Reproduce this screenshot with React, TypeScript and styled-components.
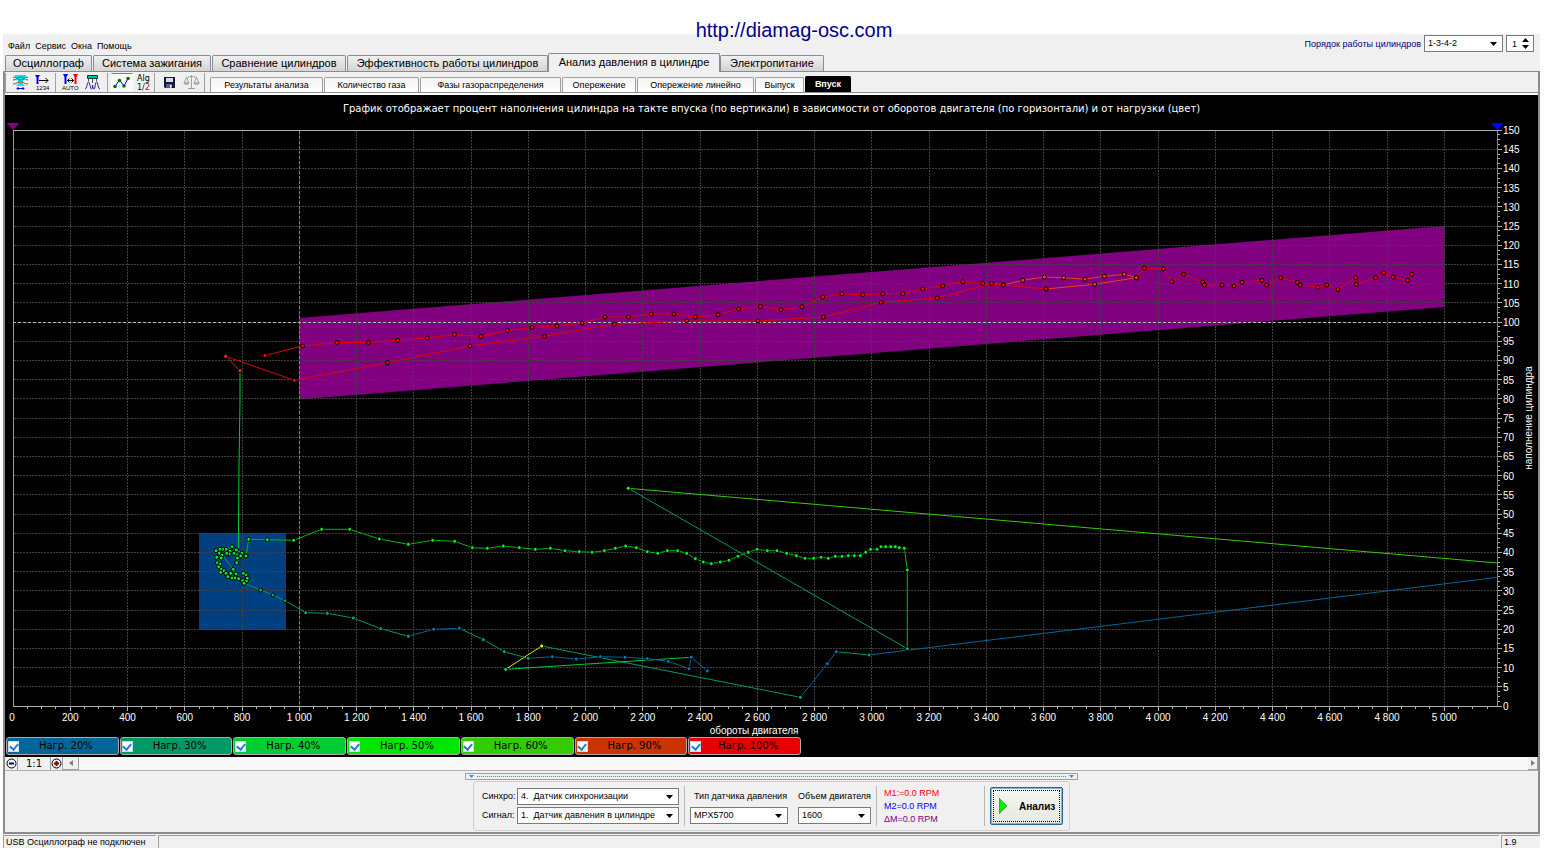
import React from "react";
import styled, { createGlobalStyle, css } from "styled-components";

const SANS = '"Liberation Sans", Arial, sans-serif';
const WIDE = '"DejaVu Sans", Verdana, sans-serif';

const GlobalStyle = createGlobalStyle`
  * { box-sizing: border-box; }
  body { margin: 0; background: #fff; color: #000; font: 9px/13px ${SANS}; }
  button, input, select { font: inherit; color: inherit; margin: 0; border-radius: 0; }
  svg { flex-shrink: 0; }
`;

/* ---------- frame ---------- */

const Page = styled.div`
  padding: 0 11px 4px 3px;
`;

const Banner = styled.header`
  height: 34px;
  padding: 18px 0 0 45px;
  text-align: center;
`;

const SiteLink = styled.a`
  position: relative;
  font: 20px/24px ${SANS};
  color: #00008b;
  text-decoration: none;
`;

const Window = styled.main`
  background: #f0f0f0;
`;

const TopRow = styled.div`
  display: flex;
  justify-content: space-between;
  height: 19px;
  padding: 1px 6px 0 5px;
`;

const Menu = styled.nav`
  display: flex;
  align-items: center;
  gap: 5px;
  padding-top: 4px;
`;

const MenuItem = styled.button`
  padding: 0;
  border: 0;
  background: none;
`;

const FiringOrder = styled.div`
  display: flex;
  gap: 3px;
`;

const FiringLabel = styled.label`
  display: flex;
  align-items: center;
  color: #000080;
`;

/* ---------- drop-downs ---------- */

const SelectBox = styled.span<{ $w: number }>`
  position: relative;
  display: block;
  width: ${(p) => p.$w}px;
  height: 17px;
  svg {
    position: absolute;
    right: 6px;
    top: 7px;
    pointer-events: none;
  }
`;

const NativeSelect = styled.select`
  appearance: none;
  display: block;
  width: 100%;
  height: 17px;
  padding: 0 16px 0 3px;
  border: 1px solid #7a7a7a;
  background: #fff;
  white-space: pre;
`;

function Select({ id, w, value }: { id: string; w: number; value: string }) {
  return (
    <SelectBox $w={w}>
      <NativeSelect id={id} defaultValue={value}>
        <option value={value}>{value}</option>
      </NativeSelect>
      <svg width="7" height="4"><path d="M0 0h7L3.5 4z" /></svg>
    </SelectBox>
  );
}

const Spinner = styled.span`
  display: flex;
  width: 28px;
  height: 17px;
  border: 1px solid #7a7a7a;
  background: #fff;
`;

const SpinInput = styled.input`
  width: 15px;
  height: 15px;
  padding: 0 0 0 5px;
  border: 0;
  outline: 0;
  background: none;
`;

const SpinButtons = styled.span`
  display: flex;
  flex-direction: column;
  justify-content: space-evenly;
`;

const SpinButton = styled.button`
  display: flex;
  padding: 0;
  border: 0;
  background: none;
`;

/* ---------- tabs ---------- */

const MainTabs = styled.div`
  display: flex;
  align-items: flex-end;
  gap: 1px;
  height: 18px;
  padding-left: 2px;
`;

const MainTab = styled.button<{ $w: number; $active?: boolean }>`
  width: ${(p) => p.$w}px;
  height: 16px;
  padding: 0;
  border: 1px solid #898c95;
  border-bottom: 0;
  border-radius: 2px 2px 0 0;
  background: linear-gradient(#f0f0f0, #d4d4d4);
  font: 11px/15px ${SANS};
  white-space: nowrap;
  ${(p) =>
    p.$active &&
    css`
      position: relative;
      height: 19px;
      margin: 0 -1px -1px;
      padding-bottom: 1px;
      background: #f0f0f0;
    `}
`;

const TabPanel = styled.section`
  border: solid #8c8c8c;
  border-width: 1px 2px 2px;
`;

const Toolbar = styled.div`
  display: flex;
  height: 21px;
  border-bottom: 1px solid #8c8c8c;
`;

const Tools = styled.div`
  display: flex;
  align-items: center;
  width: 205px;
`;

const ToolGroup = styled.div<{ $w: number }>`
  display: flex;
  align-items: center;
  width: ${(p) => p.$w}px;
  height: 19px;
  padding-left: 3px;
  border-left: 1px solid #a0a0a0;
`;

const ToolButton = styled.button<{ $pressed?: boolean }>`
  display: flex;
  align-items: center;
  justify-content: center;
  width: 22px;
  height: 19px;
  padding: 0;
  border: 1px solid transparent;
  background: ${(p) => (p.$pressed ? "#f9f9f9" : "none")};
  border-top-color: ${(p) => (p.$pressed ? "#808080" : "transparent")};
`;

const SubTabs = styled.div`
  display: flex;
  align-items: flex-end;
  gap: 1px;
`;

const SubTab = styled.button<{ $w: number; $active?: boolean }>`
  width: ${(p) => p.$w}px;
  height: ${(p) => (p.$active ? 16 : 15)}px;
  padding: 0;
  border: 1px solid #a0a0a0;
  border-bottom: 0;
  border-radius: 2px 2px 0 0;
  background: linear-gradient(#f4f4f4, #ffffff);
  white-space: nowrap;
  ${(p) =>
    p.$active &&
    css`
      border-color: #000;
      background: #000;
      color: #fff;
      font-weight: bold;
    `}
`;

/* ---------- chart ---------- */

const ChartPanel = styled.div`
  padding-bottom: 2px;
  border-top: 2px solid #fff;
  background: #000;
`;

const ChartTitle = styled.h1`
  height: 25px;
  margin: 0;
  padding-top: 7px;
  font: 10px/14px ${WIDE};
  color: #fff;
  text-align: center;
`;

const ChartSvg = styled.svg`
  display: block;
  width: 100%;
  height: auto;
  font: 10px ${SANS};
`;

const Legend = styled.div`
  display: grid;
  grid-template-columns: repeat(7, 1fr);
  gap: 1px;
  max-width: 796px;
  padding-left: 1px;
`;

const LegendItem = styled.label<{ $color: string }>`
  display: flex;
  align-items: center;
  height: 18px;
  padding: 0 5px 0 1px;
  border: 1px solid #b0a8a8;
  border-radius: 3px;
  background: ${(p) => p.$color};
  font: 10px/14px ${WIDE};
`;

const LegendText = styled.span`
  flex: 1;
  text-align: center;
`;

const Check = styled.input`
  appearance: none;
  display: flex;
  justify-content: center;
  width: 11px;
  height: 11px;
  background: #fff;
  border: 1px solid #c8dcec;
  &:checked::after {
    content: "";
    width: 4px;
    height: 6px;
    border: solid #1e7fe0;
    border-width: 0 2px 2px 0;
    transform: rotate(40deg);
  }
`;

const ScrollRow = styled.div`
  display: flex;
  height: 14px;
  border-bottom: 1px solid #b0b0b0;
  background: #f8f8f8;
`;

const ScrollButton = styled.button<{ $w: number; $raised?: boolean }>`
  display: flex;
  align-items: center;
  justify-content: center;
  width: ${(p) => p.$w}px;
  padding: 0;
  border: 0 solid #a0a0a0;
  border-right-width: 1px;
  border-bottom-width: ${(p) => (p.$raised ? 1 : 0)}px;
  background: #f0f0f0;
  font: 10px/13px ${WIDE};
`;

const ScrollTrack = styled.div`
  flex: 1;
`;

/* ---------- bottom controls ---------- */

const BottomArea = styled.div`
  display: flex;
  flex-direction: column;
  align-items: center;
  padding: 2px 0 1px;
`;

const Splitter = styled.div`
  display: flex;
  align-items: center;
  justify-content: space-between;
  width: 613px;
  height: 7px;
  margin-bottom: 1px;
  padding: 0 3px;
  border: 1px solid #a0a0a0;
`;

const SplitterDots = styled.span`
  flex: 1;
  margin: 0 3px;
  border-top: 1px dotted #3090f0;
`;

const Group = styled.form`
  display: flex;
  align-items: center;
  height: 50px;
  padding: 0 6px 0 8px;
  border: 1px solid #d0d0d0;
  border-radius: 3px;
`;

const Fields = styled.div`
  display: grid;
  grid-template-columns: 35px auto;
  row-gap: 2px;
  align-items: center;
`;

const Divider = styled.span`
  width: 1px;
  height: 40px;
  margin: 0 5px;
  background: #b8b8b8;
`;

const Column = styled.div<{ $gap: number }>`
  display: flex;
  flex-direction: column;
  margin-right: ${(p) => p.$gap}px;
`;

const ColumnLabel = styled.label<{ $indent: number }>`
  height: 17px;
  margin-bottom: 2px;
  padding: 2px 0 0 ${(p) => p.$indent}px;
  white-space: nowrap;
`;

const Readings = styled.div`
  width: 97px;
  padding-left: 2px;
`;

const Reading = styled.output<{ $color: string }>`
  display: block;
  color: ${(p) => p.$color};
`;

const AnalyzeButton = styled.button`
  display: flex;
  align-items: center;
  gap: 11px;
  width: 73px;
  height: 38px;
  padding: 0 8px;
  border: 1px solid #2c628b;
  border-radius: 2px;
  outline: 1px dotted #000;
  outline-offset: -4px;
  background: linear-gradient(#f6f6f2, #e8e8e0);
  box-shadow: inset 0 0 0 1px #7eb4ea;
  font: bold 10px/13px ${SANS};
`;

const StatusBar = styled.footer`
  display: flex;
  gap: 2px;
  height: 14px;
  padding-top: 1px;
`;

const StatusCell = styled.span<{ $w?: number }>`
  ${(p) => (p.$w ? `width: ${p.$w}px;` : "flex: 1;")}
  height: 13px;
  padding-left: 2px;
  border: solid #a0a0a0;
  border-width: 1px 0 0 1px;
  white-space: nowrap;
`;

/* ---------- data ---------- */

const C20 = "#006699";
const C30 = "#009966";
const C40 = "#00cc33";
const C50 = "#00e600";
const C60 = "#33cc00";
const C90 = "#cc3300";
const C100 = "#e60000";

const LOADS: [string, string][] = [
  ["20%", C20], ["30%", C30], ["40%", C40], ["50%", C50],
  ["60%", C60], ["90%", C90], ["100%", C100],
];

type Series = { color: string; dot?: string; dots?: boolean; pts: string };

const SERIES: Series[] = [
  {
    color: C100, dot: "#ff0000",
    pts: "265,355.5 302.5,346 337,342.5 368.3,342.5 397.7,340.3 427.3,338 454.5,334.5 481,336.5 507.3,330.5 532,327.5 557,326 582,323 605,317 628.3,317 651.3,314 674,314 695.3,317 718,314.7 738.7,309 760.3,306.5 781,309.7 802,306.7 822.7,297 842,293.7 862.7,294.7 882.7,293.7 902.7,293.7 922.7,289 942.7,285.7 962.7,281.7 982.7,283.3 1003.3,285",
  },
  {
    color: "#f04020", dot: "#ff4000",
    pts: "1003.3,285 1022.7,280.3 1044.3,277 1063.7,277.7 1085,279.3 1104.3,276.3 1124.3,274.3 1136.3,277.7",
  },
  {
    color: C100, dot: "#ff0000",
    pts: "1136.3,277.7 1144.3,268.3 1163.3,269 1171.7,281.7 1183.7,274.3 1202.7,282 1204.3,285 1222,285 1234,286 1242,282.3 1262,280.3 1266.7,285 1280.7,277.7 1297.3,282.3 1300.3,285 1318,287.3 1326.7,285 1338,289.7 1355.7,277.7 1356.3,284.3 1375.7,277.7 1383.7,273 1393.3,277 1407.7,280.3 1411.7,274.3",
  },
  { color: "#f04020", dot: "#ff4000", pts: "1136.3,277.7 1094.7,284.3 1046,289" },
  {
    color: C100, dot: "#ff0000",
    pts: "1046,289 1003.3,285 991.7,283.3 937.3,298 881,302.3 823.3,317 758,321 686.7,321 614.3,324.3 544.3,336.3 470,346 387.3,362.7 294.3,380.3 225.7,356.3",
  },
  { color: C90, dot: "#ff3300", pts: "225.7,356.3 240,370.7" },
  { color: C40, dots: false, pts: "240,370.7 240,402 239,465 238.3,548" },
  {
    color: "#00b800", dot: "#00f020",
    pts: "246,556 248.7,539.3 267.3,539.7 293.7,540.3 321.7,529.3 349.7,529.3 379.3,539 408.3,544.3 432.7,540.3 454.7,541.3 472.3,547.7 487.3,548.3 503.3,546 519.3,547.7 535.3,549.3 550.3,548.3 565,550.7 579.3,551.7 592,552.3 604.3,550.7 615.3,548.3 625.7,546 636.3,547.7 647.3,551.7 657.7,553.3 667.3,550.7 677.7,550.7 686.7,553.3 695.3,558.7 703.3,562 711.3,563.7 720.3,562 729,560.3 738,556.3 748.3,552.3 757,549.3 767.3,550.7 777,550.7 786.7,553.3 796.3,555.7 805,558.3 813.7,558.3 821,557.3 828.3,558.3 835.3,556.3 842,556.3 848.3,555.7 854.3,555.7 860.3,555.7 865.7,552.3 870.7,549.3 877,549.3 881,546.7 885.7,546.7 890.7,546.7 895.3,546.7 899.3,547.7 904.3,548.3 907.3,570 907.3,648.7",
  },
  { color: C30, dot: "#00b070", pts: "907.3,648.7 628.3,488.3" },
  { color: C60, dots: false, pts: "628.3,488.3 1497.5,563" },
  { color: C60, dot: "#40f000", pts: "628.3,488.3" },
  { color: C20, dots: false, pts: "1497.5,577.3 869,655" },
  { color: C30, dot: "#00a870", pts: "869,655 836.3,651.7" },
  { color: C20, dot: "#0077b0", pts: "836.3,651.7 827.3,663.7 800.3,697.3" },
  { color: C30, dot: "#00b070", pts: "800.3,697.3 541.7,646" },
  { color: "#e6e600", dot: "#ffff00", pts: "541.7,646 505.7,669.3" },
  { color: C40, dot: "#00e040", pts: "505.7,669.3 691.3,657.3" },
  {
    color: C20, dot: "#0077b0",
    pts: "707.3,671 691.3,657.3 689,668.7 668.3,661.3 647.3,658.7 625,657.3 600.3,656.7 576.3,659 552.3,656.7 528.3,658.3",
  },
  { color: C30, dot: "#00a870", pts: "528.3,658.3 504.3,651.7 483.3,639.7 459.3,628.3" },
  { color: C20, dot: "#0077b0", pts: "459.3,628.3 433.7,629.3 408.3,636.3" },
  {
    color: C30, dot: "#00a870",
    pts: "408.3,636.3 380.7,628.7 353.3,618 327.3,613.3 305.7,612.7 285,600.7 273,595 260.7,590 244,583.3 220,552",
  },
  {
    color: C40, dot: "#00e830",
    pts: "246,556 242,553 236.3,550 232,546.7 226,549.3 228.7,552.7 234,553.3 239.3,557.3 237.3,558 236.7,562.7 240.7,556 230,551.3 229.3,554 226.7,553.3 222.7,549.3 220,549.3 216,550.7 219.3,553.3 222,555.3 216.7,557.3 221.3,558 217.3,562.7 220,564 218.7,566.7 221.3,569.3 220.7,572.3 224,570.7 226,573.3 228,576.7 230.7,573.3 232,578 233.3,569.3 236,574 235.3,578 238.7,578.7 242.7,580.7 244,583.3 246.7,580.7 247.3,578 246,574.7 243.3,573.3",
  },
];

const toX = (rpm: number) => 13 + rpm * 0.28625;
const toY = (fill: number) => 706 - fill * 3.84;
const crisp = (n: number) => Math.floor(n) + 0.5;
const range = (from: number, to: number, step: number) => {
  const out: number[] = [];
  for (let v = from; v <= to; v += step) out.push(v);
  return out;
};
const rpmText = (n: number) =>
  n < 1000 ? String(n) : `${Math.floor(n / 1000)} ${String(n % 1000).padStart(3, "0")}`;

function Chart() {
  return (
    <ChartSvg viewBox="5 120 1533 617" role="img" aria-label="Наполнение цилиндра">
      <polygon points="299,318 1444.5,226 1444.5,307 299,399.5" fill="#800080" />
      <rect x="199" y="533" width="87" height="97" fill="#004080" />

      <g stroke="#404040" strokeDasharray="2 1" shapeRendering="crispEdges">
        {range(200, 5000, 200).map((v) => (
          <line key={v} x1={crisp(toX(v))} x2={crisp(toX(v))} y1="131" y2="706" />
        ))}
        {range(5, 145, 5).map((v) => (
          <line key={v} x1="14" x2="1497" y1={crisp(toY(v))} y2={crisp(toY(v))} />
        ))}
      </g>
      <g strokeDasharray="3 2" shapeRendering="crispEdges">
        <line x1="299.5" x2="299.5" y1="131" y2="706" stroke="#808080" />
        <line x1="13" x2="1498" y1="322.5" y2="322.5" stroke="#b8b8b8" />
      </g>

      <g stroke="#b0b0b0" shapeRendering="crispEdges">
        <line x1="13" x2="1501" y1="130.5" y2="130.5" />
        <line x1="13" x2="1501" y1="706.5" y2="706.5" />
        {range(50, 5150, 50).map((v) => (
          <line key={v} x1={crisp(toX(v))} x2={crisp(toX(v))} y1="707" y2={v % 200 ? 709 : 711} />
        ))}
        {range(0, 120, 1).map((i) => (
          <line key={i} x1="1498" x2={i % 4 ? 1500 : 1502} y1={crisp(toY(i * 1.25))} y2={crisp(toY(i * 1.25))} />
        ))}
      </g>
      <line x1="13.5" x2="13.5" y1="131" y2="706" stroke="#60c060" shapeRendering="crispEdges" />
      <line x1="1497.5" x2="1497.5" y1="131" y2="706" stroke="#909030" shapeRendering="crispEdges" />

      {SERIES.map((s, i) => (
        <polyline key={i} points={s.pts} fill="none" stroke={s.color} />
      ))}
      {SERIES.map((s, i) => s.dots !== false && (
        <g key={i} fill={s.dot} stroke="#000">
          {s.pts.split(" ").map((p, j) => {
            const [x, y] = p.split(",");
            return <circle key={j} cx={x} cy={y} r="2" />;
          })}
        </g>
      ))}

      <path d="M6.5 123h13l-6.5 7z" fill="#800080" />
      <path d="M1491 123h13l-6.5 7z" fill="#0000ff" />

      <g fill="#fff">
        {range(0, 5000, 200).map((v) => (
          <text key={v} x={v ? toX(v) : 12} y="721" textAnchor="middle">{rpmText(v)}</text>
        ))}
        {range(0, 150, 5).map((v) => (
          <text key={v} x="1503" y={toY(v) + 4}>{v}</text>
        ))}
        <text x="754" y="734" textAnchor="middle">обороты двигателя</text>
        <text transform="translate(1532 418) rotate(-90)" textAnchor="middle">
          наполнение цилиндра
        </text>
      </g>
    </ChartSvg>
  );
}

/* ---------- toolbar icons ---------- */

const Icon = ({ children }: { children: React.ReactNode }) => (
  <svg width="17" height="17" viewBox="0 0 17 17" fill="none">
    {children}
  </svg>
);

const PressureIcon = () => (
  <Icon>
    <path d="M3 1h11v2l-3 4v3l2 2H4l2-2V7L3 3z" fill="#00e8f0" />
    <path d="M1 3c4 0 4 3 7.500 3S12 3 16 3M1 6c4 0 4-3 7.500-3S12 6 16 6" stroke="#008060" />
    <path d="M1 10c4 0 4-2 7.500-2s3.500 2 7.500 2" stroke="#e03020" />
    <path d="M5 14.500h7M6.500 13L5 14.500 6.500 16M10.500 13l1.500 1.500-1.500 1.500" stroke="#0000e0" />
  </Icon>
);
const CountIcon = () => (
  <Icon>
    <path d="M1 1h5L4.500 3.500V10h-2V3.500z" fill="#0000ff" />
    <path d="M5 6.500h9M11.500 4l2.500 2.500L11.500 9" stroke="#000" />
    <text x="2" y="16" fontSize="6" fill="#000" fontFamily="Liberation Sans">1234</text>
  </Icon>
);
const AutoIcon = () => (
  <Icon>
    <path d="M1 0h5L4.500 3V10h-2V3z" fill="#0000ff" />
    <path d="M11 0h5l-1.500 3V10h-2V3z" fill="#ff0000" />
    <path d="M5.500 6.500h6M7.500 4.500l-2 2 2 2M9.500 4.500l2 2-2 2" stroke="#000" />
    <text x="0" y="16" fontSize="6" fill="#000" fontFamily="Liberation Sans">AUTO</text>
  </Icon>
);
const WaveIcon = () => (
  <Icon>
    <path d="M3.500 1.500h10v3h-10z" fill="#00c0a0" stroke="#004040" />
    <path d="M1 15c2 0 2-7 3.500-7S6 15 7.500 15 8 11 8.500 11s0 4 1.500 4 1-7 2.500-7 1.500 7 3.500 7" stroke="#2020a0" />
    <path d="M4.500 5v2M8.500 5v4M12.500 5v2" stroke="#505050" />
  </Icon>
);
const LineIcon = () => (
  <Icon>
    <path d="M2 12.500L6.500 6l4.500 6 4-7.500" stroke="#0000ff" />
    <g fill="#007000"><circle cx="2" cy="12.500" r="1.800" /><circle cx="6.500" cy="6.500" r="1.800" /><circle cx="11" cy="12" r="1.800" /><circle cx="15" cy="4.500" r="1.800" /></g>
  </Icon>
);
const AlgIcon = () => (
  <Icon>
    <g fontFamily="DejaVu Sans" fontSize="8">
      <text x="2" y="7" fill="#000">Alg</text>
      <text x="2" y="16" fill="#000080">1/</text>
      <text x="10" y="16" fill="#e00000">2</text>
    </g>
  </Icon>
);
const SaveIcon = () => (
  <Icon>
    <path d="M3 3h11v11H4l-1-1z" fill="#181838" />
    <path d="M5 4h7v4H5z" fill="#d8dce8" />
    <path d="M5 10h6v4H5z" fill="#5060a0" />
    <path d="M9 11h1.500v2.500H9z" fill="#fff" />
  </Icon>
);
const ScalesIcon = () => (
  <Icon>
    <path d="M8.500 1v13M5 14.500h7M3 3.500c2 0 3-1 5.500-1s3.500 1 5.500 1M3.500 3.500L1 9h5zM13.500 3.500L11 9h5z" stroke="#a0a0a0" />
    <path d="M1 9h5c0 2-5 2-5 0zM11 9h5c0 2-5 2-5 0z" fill="#c8c8c8" stroke="#a0a0a0" />
  </Icon>
);

const MAIN_TABS: [string, number, boolean?][] = [
  ["Осциллограф", 87],
  ["Система зажигания", 118],
  ["Сравнение цилиндров", 134],
  ["Эффективность работы цилиндров", 201],
  ["Анализ давления в цилиндре", 172, true],
  ["Электропитание", 104],
];

const SUB_TABS: [string, number, boolean?][] = [
  ["Результаты анализа", 113],
  ["Количество газа", 95],
  ["Фазы газораспределения", 141],
  ["Опережение", 74],
  ["Опережение линейно", 117],
  ["Выпуск", 49],
  ["Впуск", 46, true],
];

export default function App() {
  return (
    <Page>
      <GlobalStyle />
      <Banner>
        <SiteLink href="http://diamag-osc.com">http://diamag-osc.com</SiteLink>
      </Banner>
      <Window>
        <TopRow>
          <Menu>
            {["Файл", "Сервис", "Окна", "Помощь"].map((m) => (
              <MenuItem key={m}>{m}</MenuItem>
            ))}
          </Menu>
          <FiringOrder>
            <FiringLabel htmlFor="order">Порядок работы цилиндров</FiringLabel>
            <Select id="order" w={79} value="1-3-4-2" />
            <Spinner>
              <SpinInput aria-label="Номер цилиндра" defaultValue="1" />
              <SpinButtons>
                <SpinButton aria-label="Больше"><svg width="7" height="4"><path d="M0 4h7L3.5 0z" /></svg></SpinButton>
                <SpinButton aria-label="Меньше"><svg width="7" height="4"><path d="M0 0h7L3.5 4z" /></svg></SpinButton>
              </SpinButtons>
            </Spinner>
          </FiringOrder>
        </TopRow>

        <MainTabs role="tablist">
          {MAIN_TABS.map(([t, w, a]) => (
            <MainTab key={t} role="tab" aria-selected={!!a} $w={w} $active={a}>{t}</MainTab>
          ))}
        </MainTabs>

        <TabPanel>
          <Toolbar>
            <Tools>
              <ToolGroup $w={50}>
                <ToolButton aria-label="Давление"><PressureIcon /></ToolButton>
                <ToolButton aria-label="Нумерация"><CountIcon /></ToolButton>
              </ToolGroup>
              <ToolGroup $w={52}>
                <ToolButton aria-label="Авто"><AutoIcon /></ToolButton>
                <ToolButton aria-label="Форма"><WaveIcon /></ToolButton>
              </ToolGroup>
              <ToolGroup $w={47}>
                <ToolButton $pressed aria-label="График"><LineIcon /></ToolButton>
                <ToolButton aria-label="Алгоритм"><AlgIcon /></ToolButton>
              </ToolGroup>
              <ToolGroup $w={50}>
                <ToolButton aria-label="Сохранить"><SaveIcon /></ToolButton>
                <ToolButton aria-label="Сравнить"><ScalesIcon /></ToolButton>
              </ToolGroup>
              <ToolGroup $w={6} />
            </Tools>
            <SubTabs role="tablist">
              {SUB_TABS.map(([t, w, a]) => (
                <SubTab key={t} role="tab" aria-selected={!!a} $w={w} $active={a}>{t}</SubTab>
              ))}
            </SubTabs>
          </Toolbar>

          <ChartPanel>
            <ChartTitle>
              График отображает процент наполнения цилиндра на такте впуска (по вертикали) в зависимости от оборотов двигателя (по горизонтали) и от нагрузки (цвет)
            </ChartTitle>
            <Chart />
            <Legend>
              {LOADS.map(([n, c]) => (
                <LegendItem key={n} $color={c}>
                  <Check type="checkbox" defaultChecked />
                  <LegendText>Нагр. {n}</LegendText>
                </LegendItem>
              ))}
            </Legend>
          </ChartPanel>

          <ScrollRow>
            <ScrollButton $w={13} aria-label="Уменьшить">
              <svg width="11" height="11" fill="none"><circle cx="5.500" cy="5.500" r="4.500" stroke="#000" /><path d="M3 5.500h5" stroke="#000080" strokeWidth="2" /></svg>
            </ScrollButton>
            <ScrollButton $w={33}>1:1</ScrollButton>
            <ScrollButton $w={12} aria-label="Увеличить">
              <svg width="11" height="11" fill="none"><circle cx="5.500" cy="5.500" r="4.500" stroke="#000" /><path d="M3 5.500h5M5.500 3v5" stroke="#800000" strokeWidth="2" /></svg>
            </ScrollButton>
            <ScrollButton $w={16} $raised aria-label="Влево"><svg width="4" height="6"><path d="M4 0v6L0 3z" fill="#808080" /></svg></ScrollButton>
            <ScrollTrack />
            <ScrollButton $w={10} $raised aria-label="Вправо"><svg width="4" height="6"><path d="M0 0v6l4-3z" fill="#808080" /></svg></ScrollButton>
          </ScrollRow>

          <BottomArea>
            <Splitter>
              <svg width="5" height="3"><path d="M0 0h5L2.500 3z" fill="#3090f0" /></svg>
              <SplitterDots />
              <svg width="5" height="3"><path d="M0 0h5L2.500 3z" fill="#3090f0" /></svg>
            </Splitter>
            <Group onSubmit={(e) => e.preventDefault()}>
              <Fields>
                <label htmlFor="sync">Синхро:</label>
                <Select id="sync" w={162} value={"4.\u00a0 Датчик синхронизации"} />
                <label htmlFor="signal">Сигнал:</label>
                <Select id="signal" w={162} value={"1.\u00a0 Датчик давления в цилиндре"} />
              </Fields>
              <Divider />
              <Column $gap={10}>
                <ColumnLabel htmlFor="sensor" $indent={4}>Тип датчика давления</ColumnLabel>
                <Select id="sensor" w={98} value="MPX5700" />
              </Column>
              <Column $gap={0}>
                <ColumnLabel htmlFor="volume" $indent={0}>Объем двигателя</ColumnLabel>
                <Select id="volume" w={73} value="1600" />
              </Column>
              <Divider />
              <Readings>
                <Reading $color="#ff0000">M1:=0.0 RPM</Reading>
                <Reading $color="#0000ff">M2=0.0 RPM</Reading>
                <Reading $color="#800080">ΔM=0.0 RPM</Reading>
              </Readings>
              <Divider />
              <AnalyzeButton>
                <svg width="9" height="16"><path d="M0 0v16l8-8z" fill="#00f000" stroke="#008000" strokeWidth="0.500" /></svg>
                Анализ
              </AnalyzeButton>
            </Group>
          </BottomArea>
        </TabPanel>

        <StatusBar>
          <StatusCell $w={153}>USB Осциллограф не подключен</StatusCell>
          <StatusCell />
          <StatusCell $w={39}>1.9</StatusCell>
        </StatusBar>
      </Window>
    </Page>
  );
}
